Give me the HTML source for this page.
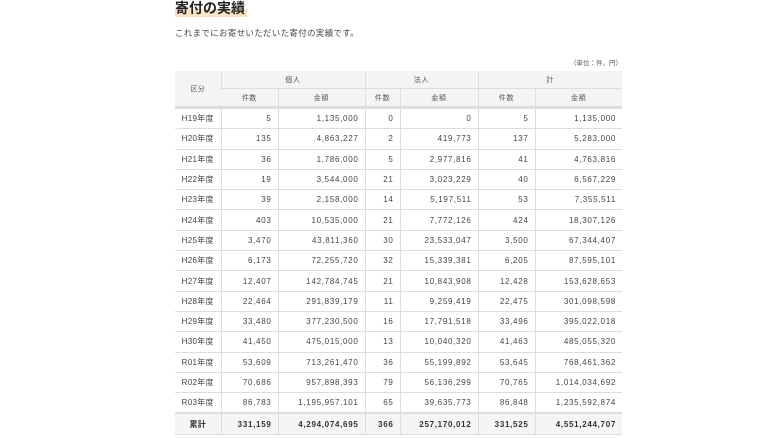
<!DOCTYPE html>
<html><head><meta charset="utf-8"><style>
body{margin:0;background:#fff;width:780px;height:438px;overflow:hidden;font-family:"Liberation Sans","Noto Sans CJK JP",sans-serif;color:#333}
h2{position:absolute;left:175px;top:-1px;margin:0;font-size:14px;font-weight:bold;color:#222;line-height:18px;padding:0 2px 0 0;background:linear-gradient(transparent 55%,#fbe3c4 55%)}
.lead{position:absolute;left:175px;top:27px;font-size:8.5px;color:#444;letter-spacing:.3px}
.unit{position:absolute;right:158px;top:57px;font-size:6.5px;color:#555}
table{position:absolute;left:175px;top:71px;border-collapse:collapse;table-layout:fixed;width:447px;font-size:8px;color:#444}
td,th{border-bottom:1px solid #ddd;border-left:1px solid #ddd;padding:0 6px;height:19.3px;text-align:right;font-weight:normal;letter-spacing:.7px}
tr td:first-child,tr th:first-child{border-left:none;text-align:center;letter-spacing:.3px}
thead th{background:#f4f4f4;text-align:center;font-size:7px;color:#555;height:17px}
thead tr:last-child th{border-bottom:3px solid #ddd}
tr.tot td{background:#f5f5f5;font-weight:bold;border-top:2px solid #ddd;color:#333}
</style></head><body>
<h2>寄付の実績</h2>
<div class="lead">これまでにお寄せいただいた寄付の実績です。</div>
<div class="unit">（単位：件、円）</div>
<table>
<colgroup><col style="width:46px"><col style="width:57px"><col style="width:87px"><col style="width:35px"><col style="width:78px"><col style="width:57px"><col style="width:87px"></colgroup>
<thead>
<tr><th rowspan="2" style="border-bottom:3px solid #ddd">区分</th><th colspan="2">個人</th><th colspan="2">法人</th><th colspan="2">計</th></tr>
<tr><th>件数</th><th>金額</th><th>件数</th><th>金額</th><th>件数</th><th>金額</th></tr>
</thead>
<tbody>
<tr><td>H19年度</td><td>5</td><td>1,135,000</td><td>0</td><td>0</td><td>5</td><td>1,135,000</td></tr>
<tr><td>H20年度</td><td>135</td><td>4,863,227</td><td>2</td><td>419,773</td><td>137</td><td>5,283,000</td></tr>
<tr><td>H21年度</td><td>36</td><td>1,786,000</td><td>5</td><td>2,977,816</td><td>41</td><td>4,763,816</td></tr>
<tr><td>H22年度</td><td>19</td><td>3,544,000</td><td>21</td><td>3,023,229</td><td>40</td><td>6,567,229</td></tr>
<tr><td>H23年度</td><td>39</td><td>2,158,000</td><td>14</td><td>5,197,511</td><td>53</td><td>7,355,511</td></tr>
<tr><td>H24年度</td><td>403</td><td>10,535,000</td><td>21</td><td>7,772,126</td><td>424</td><td>18,307,126</td></tr>
<tr><td>H25年度</td><td>3,470</td><td>43,811,360</td><td>30</td><td>23,533,047</td><td>3,500</td><td>67,344,407</td></tr>
<tr><td>H26年度</td><td>6,173</td><td>72,255,720</td><td>32</td><td>15,339,381</td><td>6,205</td><td>87,595,101</td></tr>
<tr><td>H27年度</td><td>12,407</td><td>142,784,745</td><td>21</td><td>10,843,908</td><td>12,428</td><td>153,628,653</td></tr>
<tr><td>H28年度</td><td>22,464</td><td>291,839,179</td><td>11</td><td>9,259,419</td><td>22,475</td><td>301,098,598</td></tr>
<tr><td>H29年度</td><td>33,480</td><td>377,230,500</td><td>16</td><td>17,791,518</td><td>33,496</td><td>395,022,018</td></tr>
<tr><td>H30年度</td><td>41,450</td><td>475,015,000</td><td>13</td><td>10,040,320</td><td>41,463</td><td>485,055,320</td></tr>
<tr><td>R01年度</td><td>53,609</td><td>713,261,470</td><td>36</td><td>55,199,892</td><td>53,645</td><td>768,461,362</td></tr>
<tr><td>R02年度</td><td>70,686</td><td>957,898,393</td><td>79</td><td>56,136,299</td><td>70,765</td><td>1,014,034,692</td></tr>
<tr><td>R03年度</td><td>86,783</td><td>1,195,957,101</td><td>65</td><td>39,635,773</td><td>86,848</td><td>1,235,592,874</td></tr>
<tr class="tot"><td>累計</td><td>331,159</td><td>4,294,074,695</td><td>366</td><td>257,170,012</td><td>331,525</td><td>4,551,244,707</td></tr>
</tbody></table>
</body></html>
